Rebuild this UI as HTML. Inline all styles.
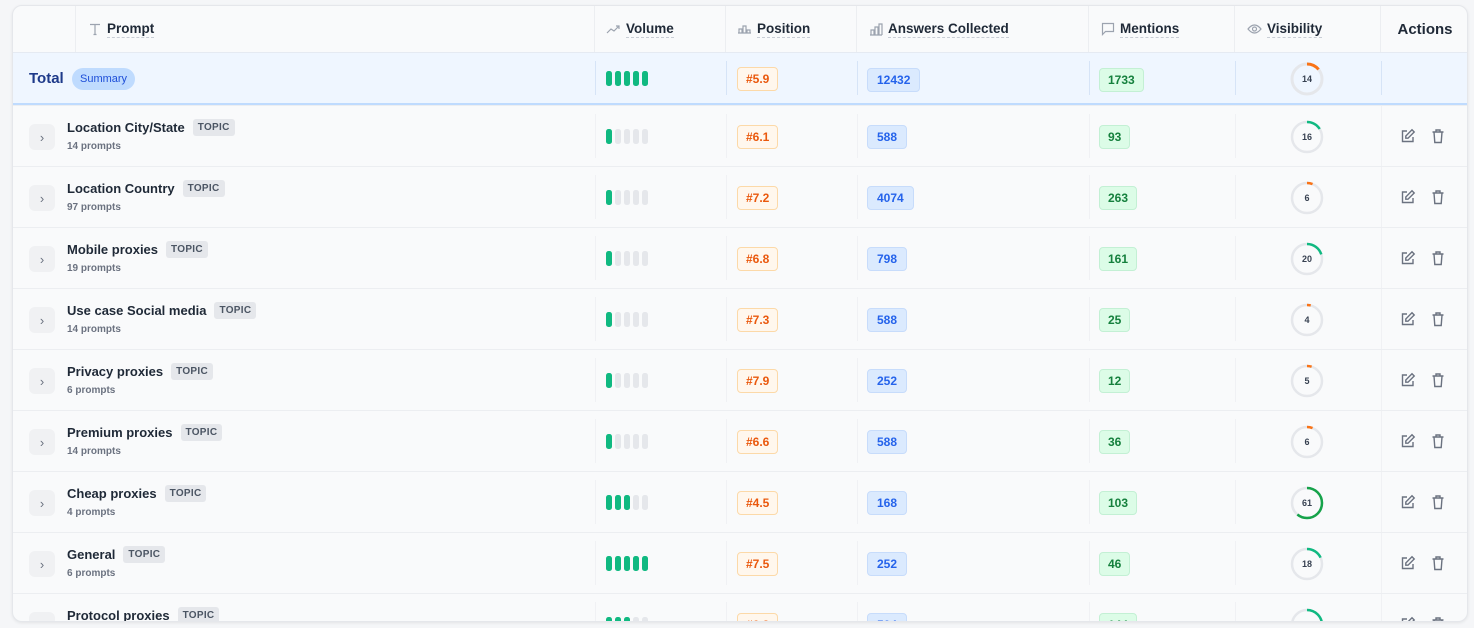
<!DOCTYPE html>
<html><head><meta charset="utf-8"><style>
*{box-sizing:border-box;margin:0;padding:0}
body{width:1474px;height:628px;background:#f5f6f8;font-family:"Liberation Sans",sans-serif;position:relative;overflow:hidden}
.box{position:absolute;left:12px;top:5px;width:1456px;height:617px;background:#f9fafb;border:1px solid #e5e7eb;border-radius:10px;overflow:hidden;box-shadow:0 1px 3px rgba(0,0,0,.08)}
.a{position:absolute}
.hd{position:absolute;top:0;height:46px;border-right:1px solid #eceef1;display:flex;align-items:center;font-size:13.5px;font-weight:bold;color:#1f2937}
.hd span.t{border-bottom:1px dashed #c9ced6;padding-bottom:1px}
.hd svg{margin-right:5px}
.row{position:absolute;left:0;width:1456px;height:61px;border-top:1px solid #eceef1}
.vl{position:absolute;top:8px;bottom:8px;width:1px;background:#f0f1f4}
.chev{position:absolute;left:16px;top:18px;width:26px;height:26px;border-radius:6px;background:#f0f1f3;color:#6b7280;font-size:13px;display:flex;align-items:center;justify-content:center}
.nm{position:absolute;left:54px;top:13px;font-size:13px;font-weight:bold;color:#1f2937;display:flex;align-items:center}
.tp{margin-left:8px;background:#e5e7eb;color:#4b5563;font-size:10px;font-weight:bold;padding:3px 5px;border-radius:3px;letter-spacing:.3px}
.sub{position:absolute;left:54px;top:35px;font-size:10px;color:#6b7280;font-weight:bold}
.bars{position:absolute;left:593px;top:23px;display:flex;gap:3.5px}
.bars i{display:block;width:5.5px;height:15px;border-radius:2.5px;background:#e5e7eb}
.bars i.on{background:#10b981}
.pos{position:absolute;left:724px;top:19px;height:24px;padding:0 8px;border:1px solid #fcd9a8;background:#fff7ed;color:#ea580c;border-radius:4px;font-size:12px;font-weight:bold;line-height:22px}
.ans{position:absolute;left:854px;top:19px;height:24px;padding:0 9px;background:#dbeafe;border:1px solid #c7dcfb;color:#2563eb;border-radius:4px;font-size:12px;font-weight:bold;line-height:22px}
.men{position:absolute;left:1086px;top:19px;height:24px;padding:0 8px;background:#dcfce7;border:1px solid #c3f0d4;color:#15803d;border-radius:4px;font-size:12px;font-weight:bold;line-height:22px}
.vis{position:absolute;left:1277px;top:14px;width:34px;height:34px}
.vis b{position:absolute;left:0;top:0;width:34px;line-height:34px;text-align:center;font-size:9px;color:#374151}
.act{position:absolute;left:1387px;top:22px;display:flex;gap:14px}
</style></head><body>
<div class="box">
<div class="hd" style="left:0;width:63px"></div>
<div class="hd" style="left:63px;width:519px;padding-left:12px"><svg width="14" height="14" viewBox="0 0 14 14" fill="none" stroke="#9ca3af" stroke-width="1.2"><path d="M2 2.5h10M7 2.5v10M5.5 12.5h3"/></svg><span class="t">Prompt</span></div>
<div class="hd" style="left:582px;width:131px;padding-left:11px"><svg width="15" height="12" viewBox="0 0 15 12" fill="none" stroke="#9ca3af" stroke-width="1.2"><path d="M1 10l4-4 3 2 5-5M10 3h3v3"/></svg><span class="t">Volume</span></div>
<div class="hd" style="left:713px;width:131px;padding-left:11px"><svg width="15" height="12" viewBox="0 0 15 12" fill="none" stroke="#9ca3af" stroke-width="1.2"><path d="M1 10h13M2 10V6h3v4M6 10V3h3v7M10 10V7h3v3"/></svg><span class="t">Position</span></div>
<div class="hd" style="left:844px;width:232px;padding-left:12px"><svg width="14" height="13" viewBox="0 0 14 13" fill="none" stroke="#9ca3af" stroke-width="1.2"><path d="M1 12h12M2 12V7h3v5M6 12V4h3v8M10 12V1h3v11"/></svg><span class="t">Answers Collected</span></div>
<div class="hd" style="left:1076px;width:146px;padding-left:12px"><svg width="14" height="14" viewBox="0 0 14 14" fill="none" stroke="#9ca3af" stroke-width="1.2"><path d="M1.5 1.5h11v8h-8l-3 3z"/></svg><span class="t">Mentions</span></div>
<div class="hd" style="left:1222px;width:146px;padding-left:12px"><svg width="15" height="12" viewBox="0 0 15 12" fill="none" stroke="#9ca3af" stroke-width="1.2"><path d="M1 6q6.5-8 13 0q-6.5 8-13 0z"/><circle cx="7.5" cy="6" r="2"/></svg><span class="t">Visibility</span></div>
<div class="hd" style="left:1368px;width:88px;justify-content:center;font-size:15px;border-right:none">Actions</div>

<div class="row" style="top:46px;height:53px;background:#eff6ff;border-top:1px solid #e5eaf2;border-bottom:2px solid #bfdbfe">
<div class="a" style="left:16px;top:17px;font-size:15px;font-weight:bold;color:#1e3a8a">Total</div>
<div class="a" style="left:59px;top:15px;background:#bfdbfe;color:#1d4ed8;font-size:11px;padding:5px 8px;border-radius:12px">Summary</div>
<div class="vl" style="left:582px;background:#d6e4f7"></div><div class="vl" style="left:713px;background:#d6e4f7"></div><div class="vl" style="left:844px;background:#d6e4f7"></div><div class="vl" style="left:1076px;background:#d6e4f7"></div><div class="vl" style="left:1222px;background:#d6e4f7"></div><div class="vl" style="left:1368px;background:#d6e4f7"></div>
<div class="bars" style="top:18px"><i class="on"></i><i class="on"></i><i class="on"></i><i class="on"></i><i class="on"></i></div>
<div class="pos" style="top:14px">#5.9</div><div class="ans" style="top:15px">12432</div><div class="men" style="top:15px">1733</div>
<div class="vis" style="top:9px"><svg width="34" height="34"><circle cx="17" cy="17" r="15" fill="none" stroke="#e5e7eb" stroke-width="3"/><circle cx="17" cy="17" r="15" fill="none" stroke="#f97316" stroke-width="3" stroke-dasharray="13.2 100" transform="rotate(-90 17 17)"/></svg><b>14</b></div>
</div>

<div id="rows"></div>
</div>
<script>
var d=[["Location City/State","14 prompts",1,"#6.1","588","93",16],["Location Country","97 prompts",1,"#7.2","4074","263",6],["Mobile proxies","19 prompts",1,"#6.8","798","161",20],["Use case Social media","14 prompts",1,"#7.3","588","25",4],["Privacy proxies","6 prompts",1,"#7.9","252","12",5],["Premium proxies","14 prompts",1,"#6.6","588","36",6],["Cheap proxies","4 prompts",3,"#4.5","168","103",61],["General","6 prompts",5,"#7.5","252","46",18],["Protocol proxies","8 prompts",3,"#6.3","504","144",30]];
var h="";d.forEach(function(r,k){var t=99+k*61;var b="";for(var i=0;i<5;i++)b+='<i'+(i<r[2]?' class="on"':'')+'></i>';
var c=r[6]<15?"#f97316":(r[6]>50?"#16a34a":"#10b981");var L=94.25*r[6]/100;
h+='<div class="row" style="top:'+t+'px"><div class="chev">&#8250;</div><div class="nm">'+r[0]+'<span class="tp">TOPIC</span></div><div class="sub">'+r[1]+'</div>'+
'<div class="vl" style="left:582px"></div><div class="vl" style="left:713px"></div><div class="vl" style="left:844px"></div><div class="vl" style="left:1076px"></div><div class="vl" style="left:1222px"></div><div class="vl" style="left:1368px;top:0;bottom:0"></div>'+
'<div class="bars">'+b+'</div><div class="pos">'+r[3]+'</div><div class="ans">'+r[4]+'</div><div class="men">'+r[5]+'</div>'+
'<div class="vis"><svg width="34" height="34"><circle cx="17" cy="17" r="15" fill="none" stroke="#e5e7eb" stroke-width="2.5"/><circle cx="17" cy="17" r="15" fill="none" stroke="'+c+'" stroke-width="2.5" stroke-dasharray="'+L+' 100" transform="rotate(-90 17 17)"/></svg><b>'+r[6]+'</b></div>'+
'<div class="act"><svg width="16" height="16" viewBox="0 0 16 16" fill="none" stroke="#6b7280" stroke-width="1.4"><path d="M13 9v4.5H2.5V3H7"/><path d="M12 1.8l2.2 2.2L8 10.2H5.8V8z"/></svg><svg width="16" height="16" viewBox="0 0 16 16" fill="none" stroke="#6b7280" stroke-width="1.4"><path d="M2.5 4h11M6 4V2h4v2M4 4l.8 10.5h6.4L12 4"/></svg></div></div>';});
document.getElementById("rows").innerHTML=h;
</script>
</body></html>
